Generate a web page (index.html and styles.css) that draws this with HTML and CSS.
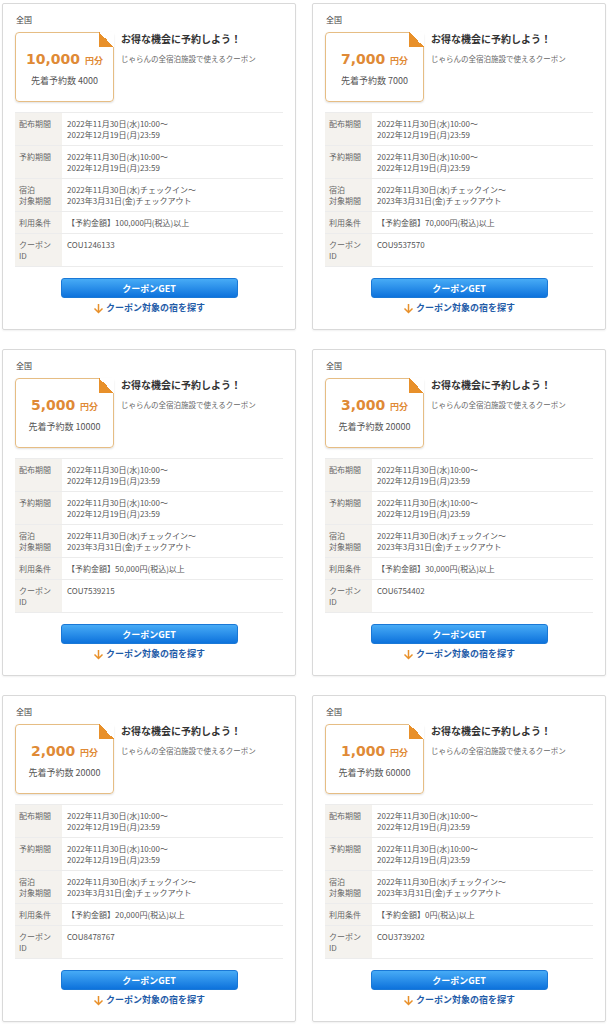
FILE: index.html
```html
<!DOCTYPE html>
<html lang="ja">
<head>
  <meta charset="UTF-8">
  <meta name="viewport" content="width=device-width, initial-scale=1.0">
  <title>クーポン一覧</title>
  <link rel="stylesheet" href="styles.css">
</head>
<body>
  <div class="coupon-list">

    <div class="card">
      <div class="area">全国</div>
      <div class="head">
        <div class="ticket">
          <div class="amount">10,000 <span class="unit">円分</span></div>
          <div class="count">先着予約数 4000</div>
        </div>
        <div class="catch">
          <div class="catch-title">お得な機会に予約しよう！</div>
          <div class="catch-sub">じゃらんの全宿泊施設で使えるクーポン</div>
        </div>
      </div>
      <table class="info">
        <tr><th>配布期間</th><td>2022年11月30日(水)10:00～<br>2022年12月19日(月)23:59</td></tr>
        <tr><th>予約期間</th><td>2022年11月30日(水)10:00～<br>2022年12月19日(月)23:59</td></tr>
        <tr><th>宿泊<br>対象期間</th><td>2022年11月30日(水)チェックイン～<br>2023年3月31日(金)チェックアウト</td></tr>
        <tr><th>利用条件</th><td>【予約金額】100,000円(税込)以上</td></tr>
        <tr><th>クーポン<br>ID</th><td>COU1246133</td></tr>
      </table>
      <div class="actions">
        <button class="get-btn">クーポンGET</button>
        <a class="search-link" href="#"><svg width="11" height="11" viewBox="0 0 11 11"><path d="M5.5 1v8.5M1.5 5.5l4 4 4-4" fill="none" stroke="#e8902a" stroke-width="1.5"/></svg>クーポン対象の宿を探す</a>
      </div>
    </div>

    <div class="card">
      <div class="area">全国</div>
      <div class="head">
        <div class="ticket">
          <div class="amount">7,000 <span class="unit">円分</span></div>
          <div class="count">先着予約数 7000</div>
        </div>
        <div class="catch">
          <div class="catch-title">お得な機会に予約しよう！</div>
          <div class="catch-sub">じゃらんの全宿泊施設で使えるクーポン</div>
        </div>
      </div>
      <table class="info">
        <tr><th>配布期間</th><td>2022年11月30日(水)10:00～<br>2022年12月19日(月)23:59</td></tr>
        <tr><th>予約期間</th><td>2022年11月30日(水)10:00～<br>2022年12月19日(月)23:59</td></tr>
        <tr><th>宿泊<br>対象期間</th><td>2022年11月30日(水)チェックイン～<br>2023年3月31日(金)チェックアウト</td></tr>
        <tr><th>利用条件</th><td>【予約金額】70,000円(税込)以上</td></tr>
        <tr><th>クーポン<br>ID</th><td>COU9537570</td></tr>
      </table>
      <div class="actions">
        <button class="get-btn">クーポンGET</button>
        <a class="search-link" href="#"><svg width="11" height="11" viewBox="0 0 11 11"><path d="M5.5 1v8.5M1.5 5.5l4 4 4-4" fill="none" stroke="#e8902a" stroke-width="1.5"/></svg>クーポン対象の宿を探す</a>
      </div>
    </div>

    <div class="card">
      <div class="area">全国</div>
      <div class="head">
        <div class="ticket">
          <div class="amount">5,000 <span class="unit">円分</span></div>
          <div class="count">先着予約数 10000</div>
        </div>
        <div class="catch">
          <div class="catch-title">お得な機会に予約しよう！</div>
          <div class="catch-sub">じゃらんの全宿泊施設で使えるクーポン</div>
        </div>
      </div>
      <table class="info">
        <tr><th>配布期間</th><td>2022年11月30日(水)10:00～<br>2022年12月19日(月)23:59</td></tr>
        <tr><th>予約期間</th><td>2022年11月30日(水)10:00～<br>2022年12月19日(月)23:59</td></tr>
        <tr><th>宿泊<br>対象期間</th><td>2022年11月30日(水)チェックイン～<br>2023年3月31日(金)チェックアウト</td></tr>
        <tr><th>利用条件</th><td>【予約金額】50,000円(税込)以上</td></tr>
        <tr><th>クーポン<br>ID</th><td>COU7539215</td></tr>
      </table>
      <div class="actions">
        <button class="get-btn">クーポンGET</button>
        <a class="search-link" href="#"><svg width="11" height="11" viewBox="0 0 11 11"><path d="M5.5 1v8.5M1.5 5.5l4 4 4-4" fill="none" stroke="#e8902a" stroke-width="1.5"/></svg>クーポン対象の宿を探す</a>
      </div>
    </div>

    <div class="card">
      <div class="area">全国</div>
      <div class="head">
        <div class="ticket">
          <div class="amount">3,000 <span class="unit">円分</span></div>
          <div class="count">先着予約数 20000</div>
        </div>
        <div class="catch">
          <div class="catch-title">お得な機会に予約しよう！</div>
          <div class="catch-sub">じゃらんの全宿泊施設で使えるクーポン</div>
        </div>
      </div>
      <table class="info">
        <tr><th>配布期間</th><td>2022年11月30日(水)10:00～<br>2022年12月19日(月)23:59</td></tr>
        <tr><th>予約期間</th><td>2022年11月30日(水)10:00～<br>2022年12月19日(月)23:59</td></tr>
        <tr><th>宿泊<br>対象期間</th><td>2022年11月30日(水)チェックイン～<br>2023年3月31日(金)チェックアウト</td></tr>
        <tr><th>利用条件</th><td>【予約金額】30,000円(税込)以上</td></tr>
        <tr><th>クーポン<br>ID</th><td>COU6754402</td></tr>
      </table>
      <div class="actions">
        <button class="get-btn">クーポンGET</button>
        <a class="search-link" href="#"><svg width="11" height="11" viewBox="0 0 11 11"><path d="M5.5 1v8.5M1.5 5.5l4 4 4-4" fill="none" stroke="#e8902a" stroke-width="1.5"/></svg>クーポン対象の宿を探す</a>
      </div>
    </div>

    <div class="card">
      <div class="area">全国</div>
      <div class="head">
        <div class="ticket">
          <div class="amount">2,000 <span class="unit">円分</span></div>
          <div class="count">先着予約数 20000</div>
        </div>
        <div class="catch">
          <div class="catch-title">お得な機会に予約しよう！</div>
          <div class="catch-sub">じゃらんの全宿泊施設で使えるクーポン</div>
        </div>
      </div>
      <table class="info">
        <tr><th>配布期間</th><td>2022年11月30日(水)10:00～<br>2022年12月19日(月)23:59</td></tr>
        <tr><th>予約期間</th><td>2022年11月30日(水)10:00～<br>2022年12月19日(月)23:59</td></tr>
        <tr><th>宿泊<br>対象期間</th><td>2022年11月30日(水)チェックイン～<br>2023年3月31日(金)チェックアウト</td></tr>
        <tr><th>利用条件</th><td>【予約金額】20,000円(税込)以上</td></tr>
        <tr><th>クーポン<br>ID</th><td>COU8478767</td></tr>
      </table>
      <div class="actions">
        <button class="get-btn">クーポンGET</button>
        <a class="search-link" href="#"><svg width="11" height="11" viewBox="0 0 11 11"><path d="M5.5 1v8.5M1.5 5.5l4 4 4-4" fill="none" stroke="#e8902a" stroke-width="1.5"/></svg>クーポン対象の宿を探す</a>
      </div>
    </div>

    <div class="card">
      <div class="area">全国</div>
      <div class="head">
        <div class="ticket">
          <div class="amount">1,000 <span class="unit">円分</span></div>
          <div class="count">先着予約数 60000</div>
        </div>
        <div class="catch">
          <div class="catch-title">お得な機会に予約しよう！</div>
          <div class="catch-sub">じゃらんの全宿泊施設で使えるクーポン</div>
        </div>
      </div>
      <table class="info">
        <tr><th>配布期間</th><td>2022年11月30日(水)10:00～<br>2022年12月19日(月)23:59</td></tr>
        <tr><th>予約期間</th><td>2022年11月30日(水)10:00～<br>2022年12月19日(月)23:59</td></tr>
        <tr><th>宿泊<br>対象期間</th><td>2022年11月30日(水)チェックイン～<br>2023年3月31日(金)チェックアウト</td></tr>
        <tr><th>利用条件</th><td>【予約金額】0円(税込)以上</td></tr>
        <tr><th>クーポン<br>ID</th><td>COU3739202</td></tr>
      </table>
      <div class="actions">
        <button class="get-btn">クーポンGET</button>
        <a class="search-link" href="#"><svg width="11" height="11" viewBox="0 0 11 11"><path d="M5.5 1v8.5M1.5 5.5l4 4 4-4" fill="none" stroke="#e8902a" stroke-width="1.5"/></svg>クーポン対象の宿を探す</a>
      </div>
    </div>

  </div>
</body>
</html>
```

FILE: styles.css
```css
body { margin: 0; padding: 3px 2px; background: #fff; font-family: "Noto Sans CJK JP", "Noto Sans", sans-serif; color: #555; }
.coupon-list { display: grid; grid-template-columns: 294px 294px; column-gap: 16px; row-gap: 19px; }
.card { border: 1px solid #d9d9d9; border-radius: 2px; padding: 10px 12px 15px; box-shadow: 0 1px 2px rgba(0, 0, 0, 0.06); }
.area { font-size: 8px; line-height: 11px; color: #444; padding-left: 1px; }
.head { display: flex; gap: 7px; margin-top: 7px; }
.ticket { position: relative; box-sizing: border-box; width: 99px; height: 70px; border: 1px solid #e6bd84; border-radius: 4px; box-shadow: 0 1px 2px rgba(0, 0, 0, 0.12); display: flex; flex-direction: column; align-items: center; justify-content: center; gap: 5px; padding-top: 3px; }
.ticket::before { content: ""; position: absolute; top: -1px; right: -1px; width: 15px; height: 15px; background: linear-gradient(to bottom left, #fff 50%, #e8902a 50%); }
.amount { font-family: "DejaVu Sans", Verdana, sans-serif; font-weight: bold; font-size: 14px; line-height: 18px; color: #df8a36; white-space: nowrap; }
.unit { font-family: "Noto Sans CJK JP", sans-serif; font-size: 9px; }
.count { font-size: 9px; line-height: 12px; color: #555; }
.catch-title { font-size: 10px; line-height: 14px; font-weight: bold; color: #333; }
.catch-sub { font-size: 7.5px; line-height: 11px; margin-top: 7px; color: #666; }
.info { width: 100%; margin-top: 10px; border-collapse: collapse; font-size: 8px; line-height: 11px; border-bottom: 1px solid #ececec; }
.info th, .info td { border-top: 1px solid #ececec; padding: 5px 4px 5px 5px; text-align: left; vertical-align: top; }
.info th { width: 39px; background: #f4f2ee; font-weight: normal; color: #666; padding-left: 4px; }
.info td { color: #555; }
.actions { display: flex; flex-direction: column; align-items: center; margin-top: 11px; }
.get-btn { width: 177px; height: 20px; padding: 0; border: 1px solid #1a78d6; border-radius: 3px; background: linear-gradient(#47abf6, #0d72dc); color: #fff; font-family: "Noto Sans CJK JP", sans-serif; font-weight: bold; font-size: 9px; cursor: pointer; }
.search-link { display: flex; align-items: center; gap: 2px; margin-top: 4px; font-size: 9px; line-height: 12px; font-weight: bold; color: #1f5ca8; text-decoration: none; }
```
